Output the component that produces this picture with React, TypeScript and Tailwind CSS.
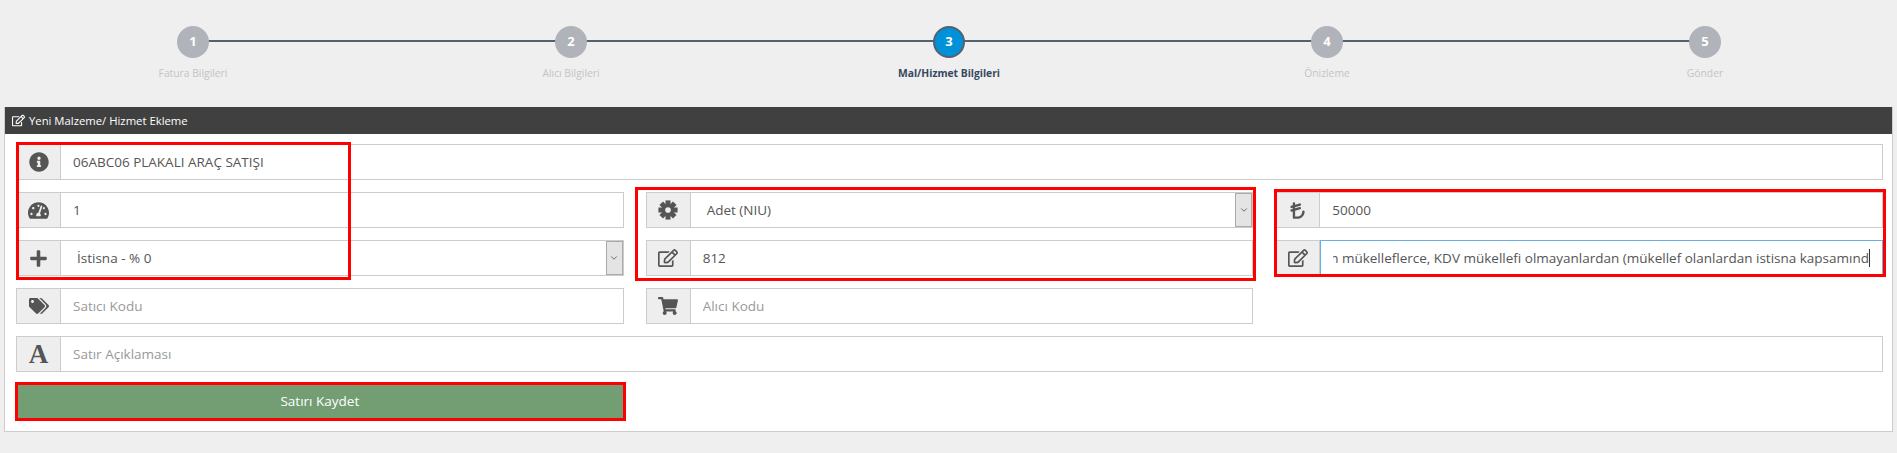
import { FaInfoCircle, FaPlus, FaRegEdit, FaShoppingCart, FaTachometerAlt, FaTags } from "react-icons/fa";
import { FaTurkishLiraSign } from "react-icons/fa6";
import { ChevronDown } from "lucide-react";
import type { ReactNode } from "react";

const steps = [
  { no: 1, label: "Fatura Bilgileri" },
  { no: 2, label: "Alıcı Bilgileri" },
  { no: 3, label: "Mal/Hizmet Bilgileri", active: true },
  { no: 4, label: "Önizleme" },
  { no: 5, label: "Gönder" },
];

function CogIcon() {
  return (
    <svg width="20" height="20" viewBox="0 0 24 24" fill="currentColor">
      <rect x="9" y="0.5" width="6" height="23" />
      <rect x="9" y="0.5" width="6" height="23" transform="rotate(45 12 12)" />
      <rect x="9" y="0.5" width="6" height="23" transform="rotate(90 12 12)" />
      <rect x="9" y="0.5" width="6" height="23" transform="rotate(135 12 12)" />
      <circle cx="12" cy="12" r="7.5" />
      <circle cx="12" cy="12" r="3.4" fill="#eeeeee" />
    </svg>
  );
}

function Stepper() {
  return (
    <div className="grid grid-cols-5 h-[107px] ml-[4px] w-[1890px] pt-[26px]">
      {steps.map((s, i) => (
        <div key={s.no} className="relative flex flex-col items-center">
          {i < 4 && <div className="absolute left-1/2 top-[14px] w-full h-[2px] bg-[#536170]" />}
          <div
            className={
              s.active
                ? "relative z-10 w-[32px] h-[32px] rounded-full bg-[#0091d9] border-2 border-[#536170] text-white font-bold text-[13px] flex items-center justify-center"
                : "relative z-10 w-[32px] h-[32px] rounded-full bg-[#b0b3b9] text-white font-bold text-[13px] flex items-center justify-center"
            }
          >
            {s.no}
          </div>
          <div
            className={
              s.active
                ? "mt-[8px] text-[10.3px] leading-[14px] font-bold text-[#34495e]"
                : "mt-[8px] text-[10.3px] leading-[14px] text-[#c4c4c4]"
            }
          >
            {s.label}
          </div>
        </div>
      ))}
    </div>
  );
}

function Group({ icon, children, focus }: { icon: ReactNode; children: ReactNode; focus?: boolean }) {
  return (
    <div className="flex h-[36px] border border-[#ccc] box-border">
      <div className="w-[44px] shrink-0 flex items-center justify-center bg-[#eee] border-r border-[#ccc] text-[#555]">
        {icon}
      </div>
      <div className={focus ? "flex-1 min-w-0 flex -m-px ml-0 border border-[#66afe9]" : "flex-1 min-w-0 flex"}>{children}</div>
    </div>
  );
}

function Field({ value, placeholder }: { value?: string; placeholder?: string }) {
  return (
    <input
      readOnly
      value={value}
      placeholder={placeholder}
      className="w-full h-full px-[12px] text-[13.5px] text-[#555] placeholder:text-[#999] bg-white outline-none"
    />
  );
}

function Pick({ value }: { value: string }) {
  return (
    <div className="w-full flex items-center justify-between bg-white text-[13.5px] text-[#555] pl-[16px]">
      <span>{value}</span>
      <span className="w-[17px] h-full flex items-center justify-center bg-[#e4e4e4] border border-[#aaa] text-[#555]">
        <ChevronDown size={10} />
      </span>
    </div>
  );
}

function Box({ className }: { className: string }) {
  return <div className={"absolute border-[3px] border-[#f00] pointer-events-none " + className} />;
}

export default function App() {
  return (
    <div className="relative w-[1897px] h-[453px] overflow-hidden bg-[#efefef] font-['Open_Sans',sans-serif]">
      <Stepper />

      <div className="mx-[4px] w-[1889px] h-[325px] bg-white border border-t-0 border-[#ccc]">
        <div className="h-[27px] bg-[#404040] text-white text-[11.3px] flex items-center gap-[4px] pl-[7px]">
          <FaRegEdit size={13} />
          <span className="pt-[1px]">Yeni Malzeme/ Hizmet Ekleme</span>
        </div>

        <div className="pl-[11px] pr-[9px] pt-[10px] flex flex-col gap-[12px]">
          <Group icon={<FaInfoCircle size={20} />}>
            <Field value="06ABC06 PLAKALI ARAÇ SATIŞI" />
          </Group>

          <div className="grid grid-cols-3 gap-x-[22px] gap-y-[12px]">
            <Group icon={<FaTachometerAlt size={21} />}>
              <Field value="1" />
            </Group>
            <Group icon={<CogIcon />}>
              <Pick value="Adet (NIU)" />
            </Group>
            <Group icon={<FaTurkishLiraSign size={19} />}>
              <Field value="50000" />
            </Group>

            <Group icon={<FaPlus size={19} />}>
              <Pick value="İstisna - % 0" />
            </Group>
            <Group icon={<FaRegEdit size={20} />}>
              <Field value="812" />
            </Group>
            <Group icon={<FaRegEdit size={20} />} focus>
              <div className="flex-1 min-w-0 mx-[12px] flex justify-end items-center overflow-hidden whitespace-nowrap text-[13.5px] text-[#555]">
                <span className="border-r border-[#333] leading-[18px]">n mükelleflerce, KDV mükellefi olmayanlardan (mükellef olanlardan istisna kapsamınd</span>
              </div>
            </Group>

            <Group icon={<FaTags size={20} />}>
              <Field placeholder="Satıcı Kodu" />
            </Group>
            <Group icon={<FaShoppingCart size={20} />}>
              <Field placeholder="Alıcı Kodu" />
            </Group>
          </div>

          <Group icon={<span className="font-['Liberation_Serif',serif] font-bold text-[27px] leading-none">A</span>}>
            <Field placeholder="Satır Açıklaması" />
          </Group>

          <div className="grid grid-cols-3 gap-x-[22px] -mt-[2px]">
            <button className="h-[38px] bg-[#739e73] text-white text-[13.5px]">Satırı Kaydet</button>
          </div>
        </div>
      </div>

      <Box className="left-[16px] top-[142px] w-[335px] h-[138px]" />
      <Box className="left-[635px] top-[187px] w-[621px] h-[94px]" />
      <Box className="left-[1274px] top-[189px] w-[612px] h-[88px]" />
      <Box className="left-[15px] top-[382px] w-[611px] h-[39px]" />
    </div>
  );
}
